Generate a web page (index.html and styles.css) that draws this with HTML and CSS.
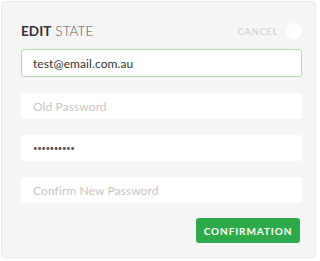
FILE: index.html
```html
<!DOCTYPE html>
<html>
<head>
<meta charset="utf-8">
<link rel="stylesheet" href="styles.css">
</head>
<body>
<div class="panel">
  <div class="header">
    <h1 class="title"><b>EDIT</b> STATE</h1>
    <div class="actions">
      <span class="cancel">CANCEL</span>
      <span class="dot"></span>
    </div>
  </div>
  <div class="fields">
    <div class="field active">test@email.com.au</div>
    <div class="field placeholder">Old Password</div>
    <div class="field secret">••••••••••</div>
    <div class="field placeholder">Confirm New Password</div>
  </div>
  <div class="footer">
    <button class="confirm">CONFIRMATION</button>
  </div>
</div>
</body>
</html>
```
FILE: styles.css
```css
html, body {
  margin: 0;
  padding: 0;
  background: #ffffff;
}
body {
  font-family: "Lato", "Open Sans", sans-serif;
}
.panel {
  box-sizing: border-box;
  margin: 1px 0 0 1px;
  width: 315px;
  height: 257px;
  background: #f5f5f5;
  border: 1px solid #e9e9e9;
  border-radius: 4px;
  padding: 19px 13px 0 19px;
}
.header {
  display: flex;
  align-items: center;
  justify-content: space-between;
  height: 20px;
  margin-bottom: 8px;
}
.title {
  margin: 0;
  font-size: 13.5px;
  font-weight: 300;
  color: #555;
  letter-spacing: 0.1px;
}
.title b {
  font-weight: 700;
  color: #333;
}
.actions {
  display: flex;
  align-items: center;
  gap: 8px;
}
.cancel {
  font-size: 9px;
  font-weight: 700;
  color: #d4d4d4;
  letter-spacing: 0.9px;
}
.dot {
  width: 16px;
  height: 16px;
  border-radius: 50%;
  background: #ffffff;
}
.fields {
  display: flex;
  flex-direction: column;
  gap: 16px;
}
.field {
  box-sizing: border-box;
  height: 26px;
  background: #fff;
  border-radius: 3px;
  padding: 0 12px;
  display: flex;
  align-items: center;
  font-size: 12px;
  color: #333;
  letter-spacing: 0.1px;
}
.field.active {
  height: 28px;
  border: 1.5px solid #a9dfae;
  padding-left: 11px;
}
.placeholder {
  color: #c6c6c6;
}
.secret {
  font-size: 8px;
  letter-spacing: -0.5px;
  color: #555;
}
.footer {
  display: flex;
  justify-content: flex-end;
  padding-right: 2px;
  margin-top: 15px;
}
.confirm {
  height: 25px;
  width: 104px;
  border: none;
  border-radius: 3px;
  background: #2faa4b;
  color: #fff;
  font-family: "Lato", sans-serif;
  font-size: 10px;
  font-weight: 700;
  letter-spacing: 0.9px;
  padding: 0;
}
```
